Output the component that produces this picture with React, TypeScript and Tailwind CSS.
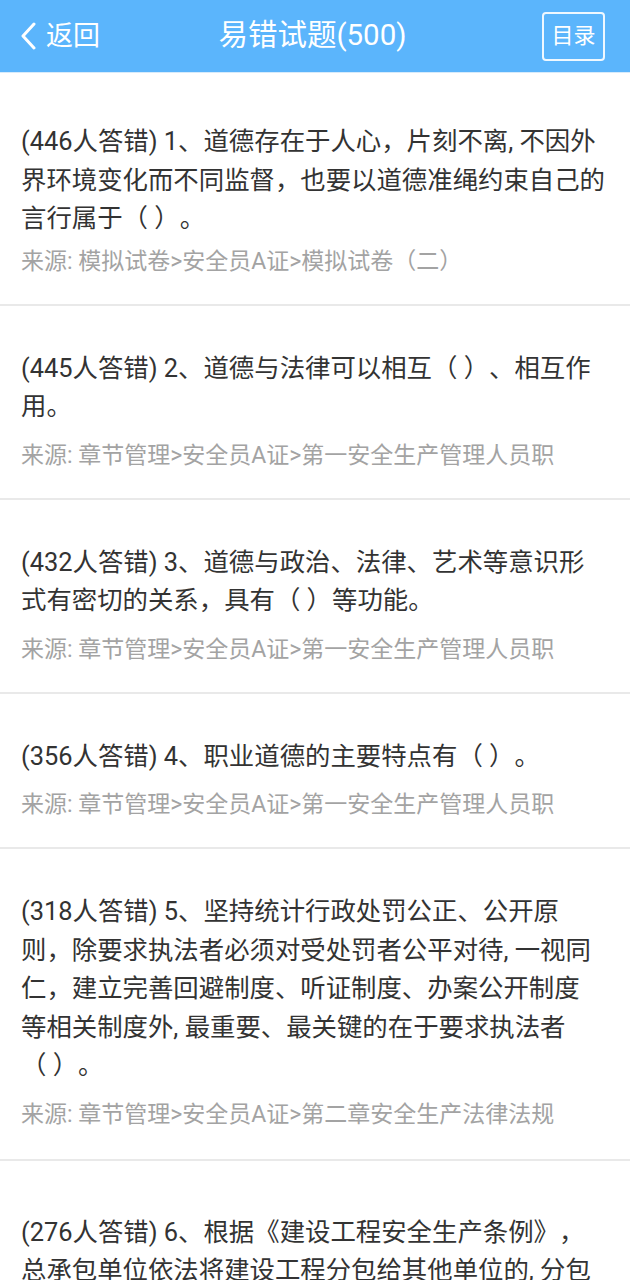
type Question = {
  id: number;
  lines: string[];
  source: string;
};

const questions: Question[] = [
  {
    id: 1,
    lines: [
      "(446人答错) 1、道德存在于人心，片刻不离, 不因外",
      "界环境变化而不同监督，也要以道德准绳约束自己的",
      "言行属于（ ）。",
    ],
    source: "来源: 模拟试卷>安全员A证>模拟试卷（二）",
  },
  {
    id: 2,
    lines: ["(445人答错) 2、道德与法律可以相互（ ）、相互作", "用。"],
    source: "来源: 章节管理>安全员A证>第一安全生产管理人员职",
  },
  {
    id: 3,
    lines: [
      "(432人答错) 3、道德与政治、法律、艺术等意识形",
      "式有密切的关系，具有（ ）等功能。",
    ],
    source: "来源: 章节管理>安全员A证>第一安全生产管理人员职",
  },
  {
    id: 4,
    lines: ["(356人答错) 4、职业道德的主要特点有（ ）。"],
    source: "来源: 章节管理>安全员A证>第一安全生产管理人员职",
  },
  {
    id: 5,
    lines: [
      "(318人答错) 5、坚持统计行政处罚公正、公开原",
      "则，除要求执法者必须对受处罚者公平对待, 一视同",
      "仁，建立完善回避制度、听证制度、办案公开制度",
      "等相关制度外, 最重要、最关键的在于要求执法者",
      "（ ）。",
    ],
    source: "来源: 章节管理>安全员A证>第二章安全生产法律法规",
  },
  {
    id: 6,
    lines: [
      "(276人答错) 6、根据《建设工程安全生产条例》，",
      "总承包单位依法将建设工程分包给其他单位的, 分包",
      "单位应当服从总承包单位的安全生产管理。",
    ],
    source: "来源: 章节管理>安全员A证>第二章安全生产法律法规",
  },
];

const font = { fontFamily: "Roboto, 'Noto Sans CJK SC', sans-serif" };

export default function App() {
  return (
    <div className="h-[1280px] w-[630px] overflow-hidden bg-white" style={font}>
      <header className="flex h-[72px] items-center justify-between bg-[#5bb5fc] pl-[20px] pr-[25px] text-white">
        <div className="flex w-[140px] items-center">
          <svg width="16" height="28" viewBox="0 0 16 28" fill="none">
            <polyline
              points="14,2 3,14 14,26"
              stroke="white"
              strokeWidth="3"
              strokeLinecap="round"
              strokeLinejoin="round"
            />
          </svg>
          <span className="ml-[10px] text-[27px] leading-none">返回</span>
        </div>
        <h1 className="text-[29.5px] font-normal leading-none">易错试题(500)</h1>
        <div className="flex w-[140px] justify-end">
          <button className="flex h-[49px] w-[63px] items-center justify-center rounded-[4px] border-2 border-white/90 text-[22px] leading-none">
            目录
          </button>
        </div>
      </header>
      <div className="h-[1px] bg-[#d7ebfb]" />

      <ul className="flex flex-col [text-spacing-trim:space-all]">
        {questions.map((q) => (
          <li
            className={`border-b-2 border-[#e9e9e9] pl-[21px] pr-[18px] ${
              q.id === 1 ? "pt-[49px]" : q.id === 6 ? "pt-[52px]" : "pt-[43px]"
            } ${q.id === 5 ? "pb-[29px]" : "pb-[27px]"}`}
            key={q.id}
          >
            <div className="text-[25.4px] leading-[38.5px] text-[#333333]">
              {q.lines.map((line) => (
                <p className="whitespace-nowrap" key={line}>
                  {line}
                </p>
              ))}
            </div>
            <p
              className={`text-[23px] leading-[30px] text-[#a3a3a3] ${
                q.id === 1 ? "mt-[9px]" : "mt-[15px]"
              }`}
            >
              {q.source}
            </p>
          </li>
        ))}
      </ul>
    </div>
  );
}
